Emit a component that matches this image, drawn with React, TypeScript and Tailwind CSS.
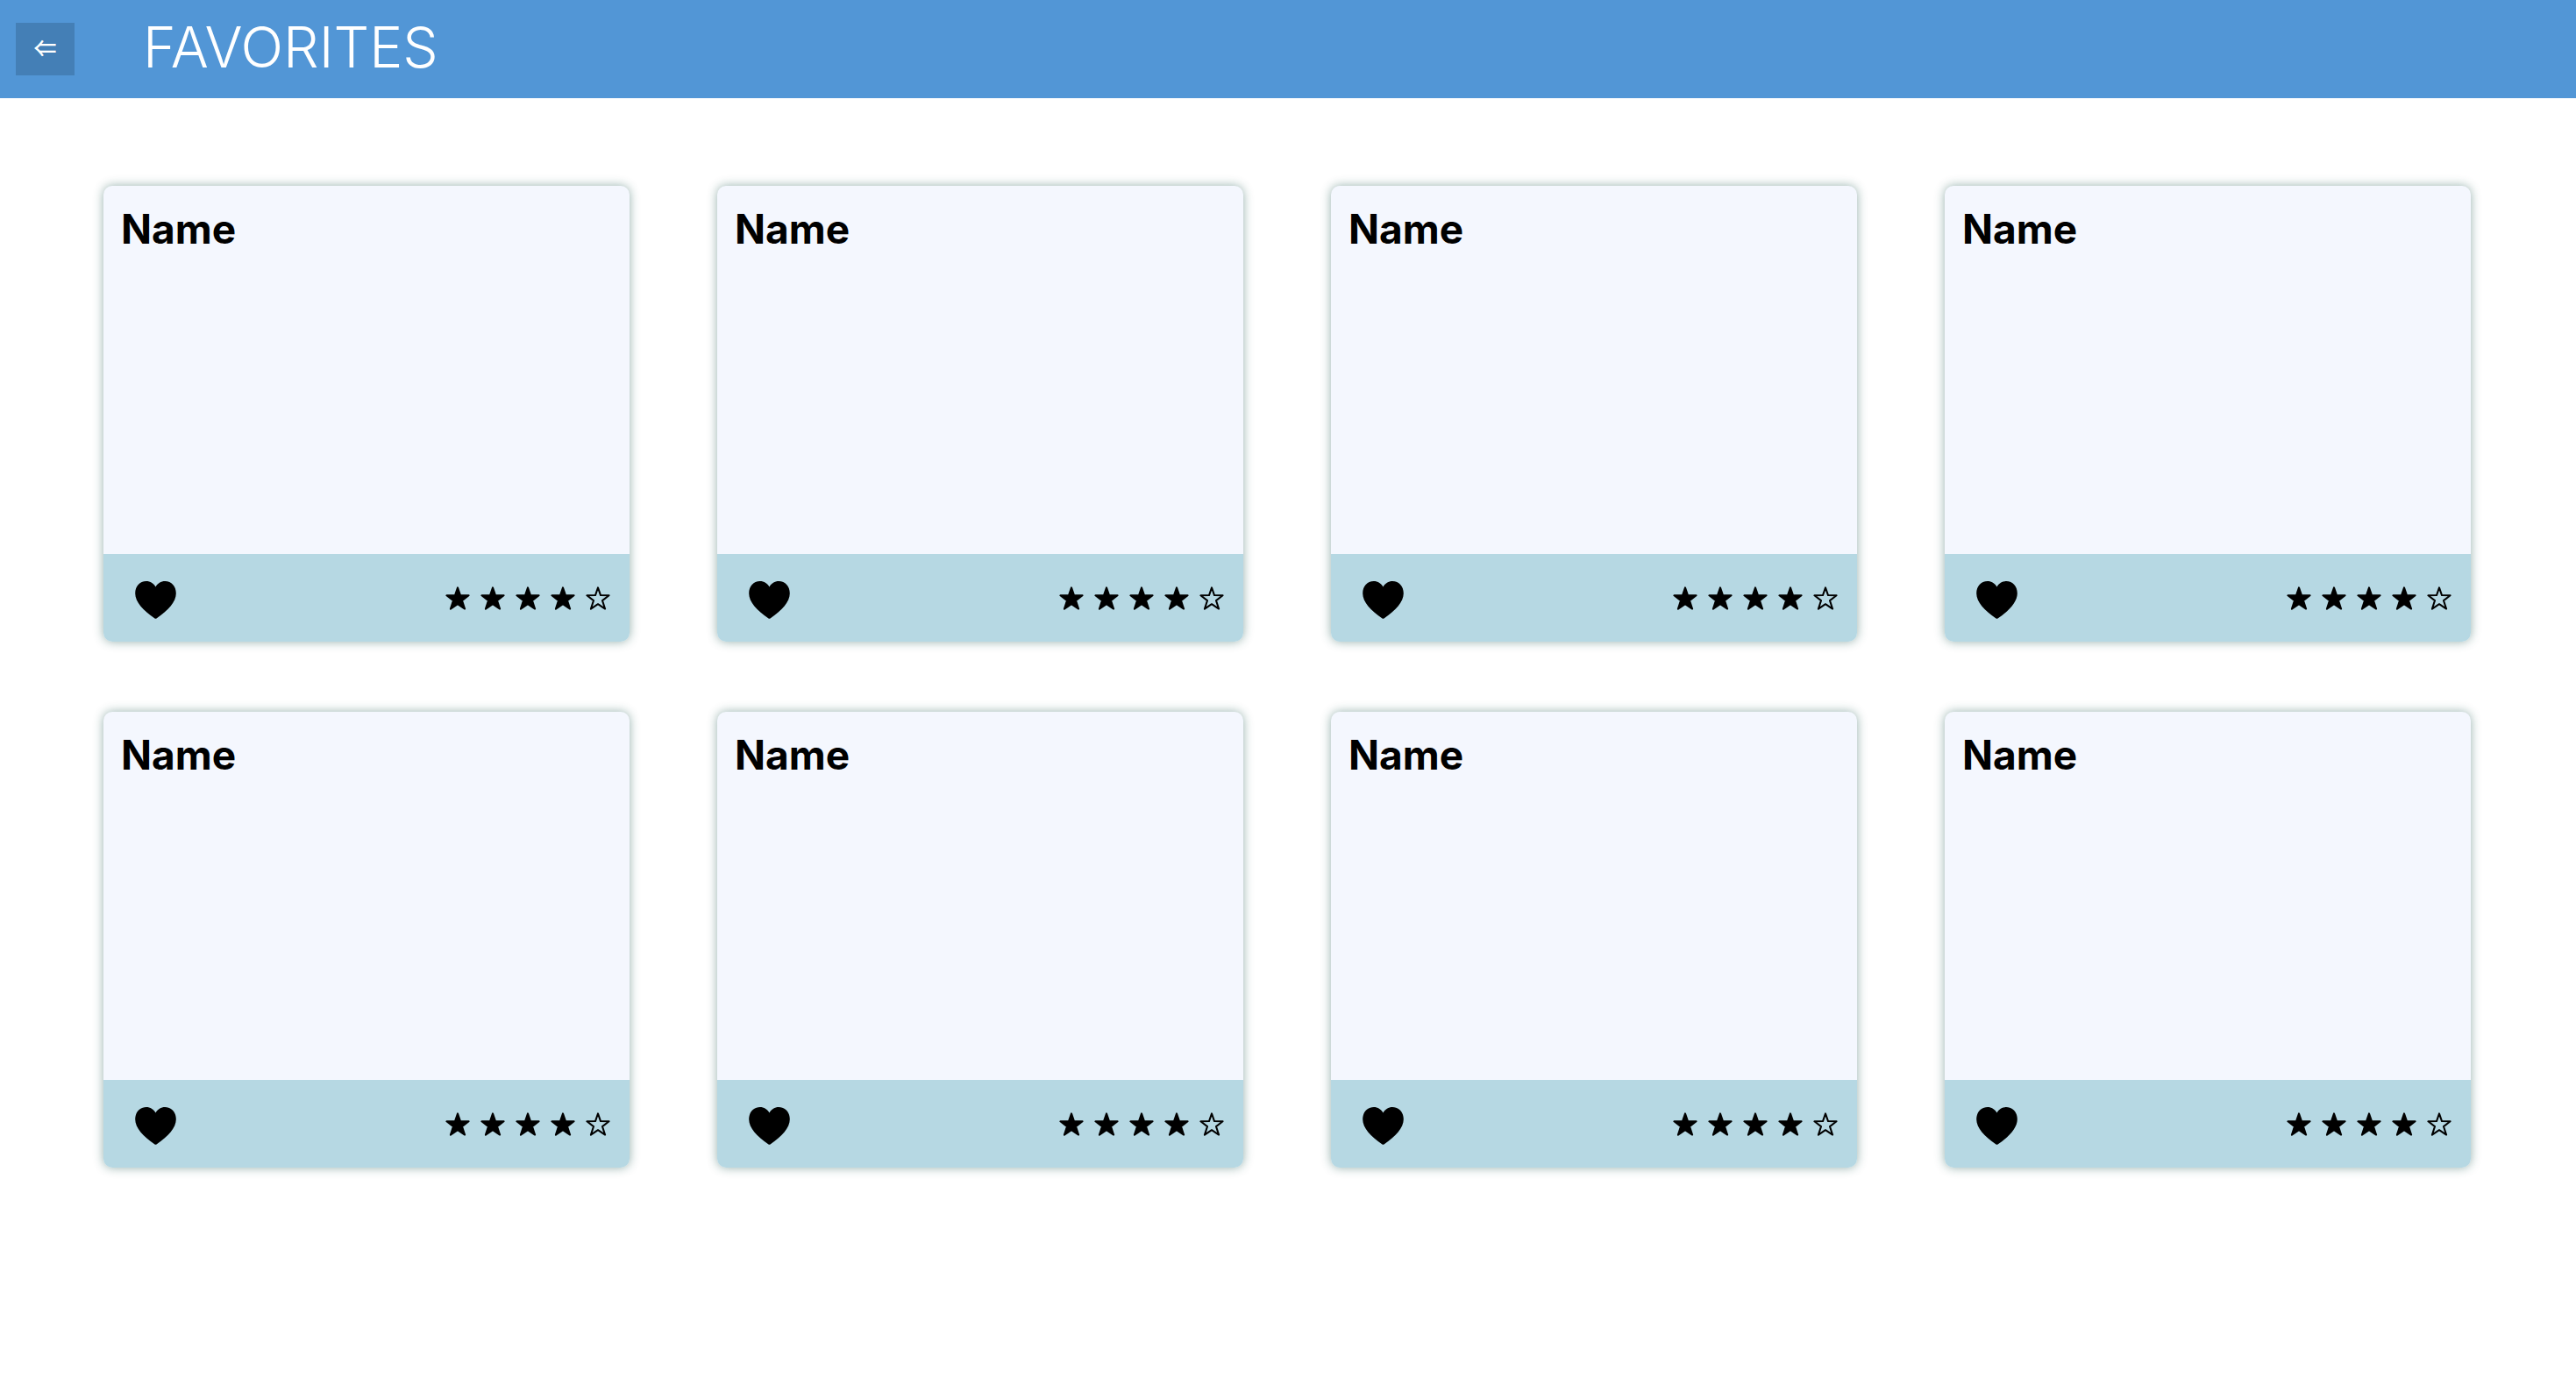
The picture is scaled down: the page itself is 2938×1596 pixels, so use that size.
const favorites = Array.from({ length: 8 }, (_, id) => ({ id, name: "Name", rating: 4 }));

function HeartIcon() {
  return (
    <svg width="47" height="43" viewBox="0 0 47 43" fill="currentColor" aria-hidden="true">
      <path d="M23.5 6.5C21.2 2.4 17.4 0 12.8 0C5.4 0 0.2 5.8 0.2 14C0.2 23.4 9.2 33.6 22.5 42.5Q23.5 43.2 24.5 42.5C37.8 33.6 46.8 23.4 46.8 14C46.8 5.8 41.6 0 34.2 0C29.6 0 25.8 2.4 23.5 6.5Z" />
    </svg>
  );
}

function StarIcon({ filled }: { filled: boolean }) {
  return (
    <svg
      width="28"
      height="27"
      viewBox="0 0 28 27"
      fill={filled ? "currentColor" : "none"}
      stroke="currentColor"
      strokeWidth="2"
      strokeLinejoin="round"
      aria-hidden="true"
    >
      <path d="M14 1.4L17 10.1L26.6 10.3L19 16.1L22.1 25.6L14 20.2L5.9 25.6L9 16.1L1.4 10.3L11 10.1Z" />
    </svg>
  );
}

function Rating({ value }: { value: number }) {
  return (
    <div role="img" aria-label={`${value} out of 5 stars`} className="flex gap-3">
      {[1, 2, 3, 4, 5].map((n) => (
        <StarIcon key={n} filled={n <= value} />
      ))}
    </div>
  );
}

function Card({ name, rating }: { name: string; rating: number }) {
  return (
    <article className="flex flex-col overflow-hidden rounded-[10px] bg-[#f4f7fe] shadow-[0_0_12px_rgba(20,80,70,0.45)]">
      <div className="min-h-[420px] p-5">
        <h2 className="text-[46px] leading-[58px] font-bold">{name}</h2>
      </div>
      <div className="flex h-[100px] items-center justify-between bg-[#b6d8e3] pr-[22px] pl-9">
        <button type="button" aria-label="Remove from favorites" className="pt-1">
          <HeartIcon />
        </button>
        <Rating value={rating} />
      </div>
    </article>
  );
}

export default function App() {
  return (
    <div className="min-h-screen bg-white font-['Inter','Liberation_Sans',sans-serif] text-black">
      <header className="flex h-28 items-center gap-[78px] bg-[#5296d6] px-[18px] text-white">
        <button
          type="button"
          aria-label="Back"
          className="flex h-[60px] w-[67px] items-center justify-center bg-[#447fb6] pb-1 font-['Noto_Sans_CJK_SC',sans-serif] text-[26px] leading-none font-medium"
        >
          ⇐
        </button>
        <h1 className="pb-1 text-[64px] leading-none font-light">FAVORITES</h1>
      </header>
      <main className="grid grid-cols-[repeat(auto-fill,minmax(560px,1fr))] gap-x-[100px] gap-y-20 pt-[100px] pr-[120px] pb-20 pl-[118px]">
        {favorites.map((item) => (
          <Card key={item.id} name={item.name} rating={item.rating} />
        ))}
      </main>
    </div>
  );
}
